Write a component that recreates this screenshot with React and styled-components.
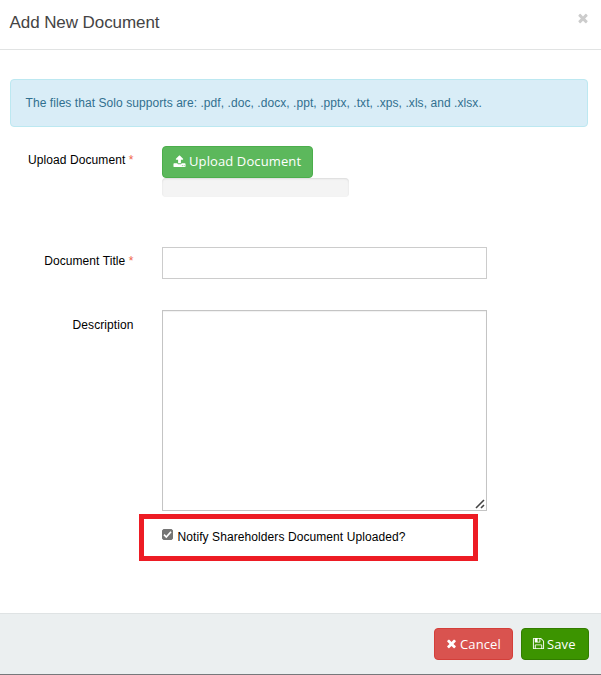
import React, { useState } from "react";
import styled, { createGlobalStyle } from "styled-components";

const GlobalStyle = createGlobalStyle`
  * { box-sizing: border-box; }
  body {
    margin: 0;
    background: #fff;
    color: #000;
    font: 12px/18px "Liberation Sans", Arial, sans-serif;
    overflow: hidden;
  }
`;

const Modal = styled.div`
  display: flex;
  flex-direction: column;
  width: 601px;
  height: 675px;
  background: #fff;
  border-bottom: 1px solid #77787b;
`;

const Header = styled.header`
  display: flex;
  justify-content: space-between;
  flex: none;
  height: 50px;
  padding: 12px 11px 0 9.5px;
  border-bottom: 1px solid #e1e3e3;
`;

const Title = styled.h1`
  margin: 0;
  color: #444;
  font-size: 17px;
  font-weight: 400;
  line-height: 22px;
  letter-spacing: -0.08px;
`;

const CloseButton = styled.button`
  display: flex;
  width: 14px;
  height: 14px;
  margin-top: -1px;
  padding: 0;
  border: 0;
  background: none;
  color: #ccc;
`;

const Body = styled.main`
  flex: 1;
  min-height: 0;
  padding: 29px 13px 0 10px;
`;

const Alert = styled.div`
  height: 48px;
  padding: 14px 14.5px;
  border: 1px solid #bce8f1;
  border-radius: 4px;
  background: #d9edf7;
  color: #31708f;
  letter-spacing: 0.065px;
`;

const Row = styled.div`
  display: grid;
  grid-template-columns: 123.5px 325px;
  column-gap: 28.5px;
  height: ${(p) => p.$height}px;
`;

const Label = styled.label`
  padding-top: ${(p) => p.$top || 5}px;
  text-align: right;
  white-space: nowrap;
  letter-spacing: 0.08px;
`;

const Required = styled.span`
  color: #f0654c;
`;

const UploadControl = styled.div`
  padding-top: 19px;
`;

const Button = styled.button`
  display: flex;
  align-items: center;
  justify-content: flex-start;
  gap: ${(p) => p.$gap || 2}px;
  width: ${(p) => p.$width}px;
  height: 32px;
  padding: 0 0 ${(p) => p.$lift || 1}px ${(p) => p.$inset || 10}px;
  border: 1px solid ${(p) => p.$border};
  border-radius: 4px;
  background: ${(p) => p.$fill};
  color: #fff;
  font: 13px/18px "Open Sans", sans-serif;
  letter-spacing: 0.11px;
  white-space: nowrap;
`;

const Icon = styled.svg`
  flex: none;
  width: ${(p) => p.$size}px;
  height: ${(p) => p.$size}px;
  fill: currentColor;
`;

const Progress = styled.div`
  width: 187px;
  height: 19px;
  border-radius: 4px;
  background: #f4f4f4;
  box-shadow: inset 0 1px 2px rgba(0, 0, 0, 0.1);
`;

const Input = styled.input`
  display: block;
  width: 325px;
  height: 32px;
  padding: 6px 12px;
  border: 1px solid #ccc;
  border-radius: 0;
  outline: none;
`;

const TextareaWrap = styled.div`
  position: relative;
  width: 325px;
  height: 201px;
`;

const Textarea = styled.textarea`
  display: block;
  width: 100%;
  height: 100%;
  padding: 6px 12px;
  border: 1px solid #c4c4c4;
  box-shadow: inset 0 1px 1px rgba(0, 0, 0, 0.06);
  outline: none;
  resize: none;
`;

const Grip = styled.svg`
  position: absolute;
  right: 2px;
  bottom: 2px;
  width: 10px;
  height: 10px;
  stroke: #444;
  stroke-width: 1.6;
  pointer-events: none;
`;

const NotifyBox = styled.div`
  width: 339px;
  height: 47px;
  margin: 3px 0 0 129px;
  padding: 9px 0 0 18px;
  border: 5px solid #ed1c24;
`;

const CheckLabel = styled.label`
  display: flex;
  align-items: flex-start;
  gap: 4.5px;
  letter-spacing: 0.085px;
`;

const CheckControl = styled.span`
  position: relative;
  display: flex;
  width: 11px;
`;

const Checkbox = styled.input`
  appearance: none;
  flex: none;
  width: 11px;
  height: 11px;
  margin: 1px 0 0;
  border: 1px solid #757575;
  border-radius: 2px;
  background: #fff;
  &:checked { background: #757575; }
`;

const CheckMark = styled.svg`
  position: absolute;
  top: 1px;
  left: 0;
  width: 11px;
  height: 11px;
  fill: none;
  stroke: #fff;
  stroke-width: 1.7;
  pointer-events: none;
`;

const Footer = styled.footer`
  display: flex;
  justify-content: flex-end;
  gap: 8px;
  flex: none;
  height: 61px;
  padding: 14px 12px 0 0;
  border-top: 1px solid #dfe3e4;
  background: #ebeff0;
`;

const paths = {
  upload:
    "M1344 1472q0-26-19-45t-45-19-45 19-19 45 19 45 45 19 45-19 19-45zm256 0q0-26-19-45t-45-19-45 19-19 45 19 45 45 19 45-19 19-45zm128-224v320q0 40-28 68t-68 28h-1472q-40 0-68-28t-28-68v-320q0-40 28-68t68-28h427q21 56 70.5 92t110.5 36h256q61 0 110.5-36t70.5-92h427q40 0 68 28t28 68zm-325-648q-17 40-59 40h-256v448q0 26-19 45t-45 19h-256q-26 0-45-19t-19-45v-448h-256q-42 0-59-40-17-39 14-69l448-448q18-19 45-19t45 19l448 448q31 30 14 69z",
  times:
    "M1490 1322q0 40-28 68l-136 136q-28 28-68 28t-68-28l-294-294-294 294q-28 28-68 28t-68-28l-136-136q-28-28-28-68t28-68l294-294-294-294q-28-28-28-68t28-68l136-136q28-28 68-28t68 28l294 294 294-294q28-28 68-28t68 28l136 136q28 28 28 68t-28 68l-294 294 294 294q28 28 28 68z",
  save:
    "M512 1536h768v-384h-768v384zm896 0h128v-896q0-14-10-38.5t-20-34.5l-281-281q-10-10-34-20t-39-10v416q0 40-28 68t-68 28h-576q-40 0-68-28t-28-68v-416h-128v1280h128v-416q0-40 28-68t68-28h832q40 0 68 28t28 68v416zm-384-928v-320q0-13-9.5-22.5t-22.5-9.5h-192q-13 0-22.5 9.5t-9.5 22.5v320q0 13 9.5 22.5t22.5 9.5h192q13 0 22.5-9.5t9.5-22.5zm640 32v928q0 40-28 68t-68 28h-1344q-40 0-68-28t-28-68v-1344q0-40 28-68t68-28h928q40 0 88 20t76 48l280 280q28 28 48 76t20 88z",
};

function Glyph({ name, size = 13 }) {
  return (
    <Icon viewBox="0 0 1792 1792" $size={size} aria-hidden="true">
      <path d={paths[name]} />
    </Icon>
  );
}

export default function App() {
  const [notify, setNotify] = useState(true);
  return (
    <>
      <GlobalStyle />
      <Modal role="dialog" aria-label="Add New Document">
        <Header>
          <Title>Add New Document</Title>
          <CloseButton aria-label="Close">
            <Glyph name="times" size={14} />
          </CloseButton>
        </Header>
        <Body>
          <Alert>
            The files that Solo supports are: .pdf, .doc, .docx, .ppt, .pptx, .txt, .xps, .xls, and .xlsx.
          </Alert>
          <Row $height={120}>
            <Label $top={24}>
              Upload Document <Required>*</Required>
            </Label>
            <UploadControl>
              <Button $width={151} $gap={3} $lift={2} $fill="#5cb85c" $border="#4cae4c">
                <Glyph name="upload" />
                Upload Document
              </Button>
              <Progress />
            </UploadControl>
          </Row>
          <Row $height={63}>
            <Label htmlFor="title">
              Document Title <Required>*</Required>
            </Label>
            <Input id="title" />
          </Row>
          <Row $height={201}>
            <Label htmlFor="description" $top={6}>Description</Label>
            <TextareaWrap>
              <Textarea id="description" />
              <Grip viewBox="0 0 10 10">
                <path d="M1 9 9 1M6 9 9 6" />
              </Grip>
            </TextareaWrap>
          </Row>
          <NotifyBox>
            <CheckLabel>
              <CheckControl>
                <Checkbox type="checkbox" checked={notify} onChange={() => setNotify(!notify)} />
                {notify && (
                  <CheckMark viewBox="0 0 11 11">
                    <path d="M2 5.7 4.3 8 9 2.7" />
                  </CheckMark>
                )}
              </CheckControl>
              <span>Notify Shareholders Document Uploaded?</span>
            </CheckLabel>
          </NotifyBox>
        </Body>
        <Footer>
          <Button $width={79} $gap={2} $fill="#d9534f" $border="#d43f3a">
            <Glyph name="times" />
            Cancel
          </Button>
          <Button $width={68} $gap={2} $fill="#3c9400" $border="#327d00">
            <Glyph name="save" />
            Save
          </Button>
        </Footer>
      </Modal>
    </>
  );
}
